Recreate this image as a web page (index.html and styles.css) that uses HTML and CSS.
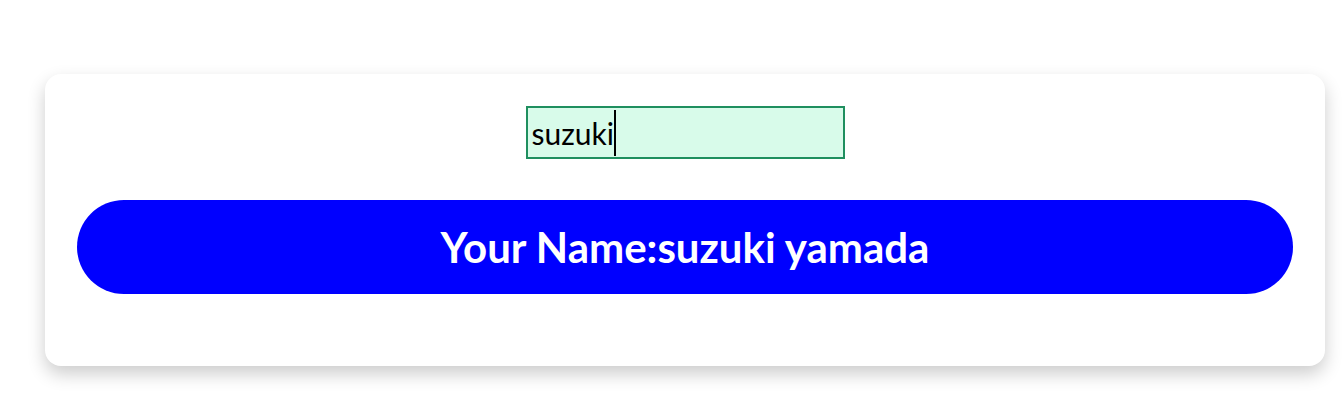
FILE: index.html
```html
<!DOCTYPE html>
<html lang="en">
<head>
<meta charset="utf-8">
<title>Your Name</title>
<link rel="stylesheet" href="styles.css">
</head>
<body>
<main class="page">
  <section class="card">
    <div class="field">
      <input class="name-input" type="text" value="suzuki">
      <span class="caret"></span>
    </div>
    <button class="name-button" type="button">Your Name:suzuki yamada</button>
  </section>
</main>
</body>
</html>
```

FILE: styles.css
```css
html, body {
  margin: 0;
  padding: 0;
  background: #ffffff;
}

.page {
  box-sizing: border-box;
  min-height: 100vh;
  padding: 74px 0 40px 45px;
  font-family: "Lato", "Liberation Sans", sans-serif;
}

.card {
  box-sizing: border-box;
  width: 1280px;
  height: 292px;
  background: #ffffff;
  border-radius: 16px;
  box-shadow: 0 8px 18px rgba(0, 0, 0, 0.2);
  padding: 32px 32px;
  display: flex;
  flex-direction: column;
  align-items: center;
}

.field {
  position: relative;
  width: 319px;
  height: 53px;
}

.name-input {
  box-sizing: border-box;
  width: 100%;
  height: 100%;
  border: 2px solid #1f8f5f;
  background: #d8fbea;
  font-family: "Lato", "Liberation Sans", sans-serif;
  font-size: 30px;
  color: #000;
  caret-color: transparent;
  padding: 0 4px;
  outline: none;
}

.caret {
  position: absolute;
  left: 88px;
  top: 4px;
  width: 2px;
  height: 46px;
  background: #000;
}

.name-button {
  margin-top: 41px;
  width: 100%;
  height: 94px;
  border: none;
  border-radius: 47px;
  background: #0000ff;
  color: #ffffff;
  font-family: "Lato", "Liberation Sans", sans-serif;
  font-weight: 700;
  font-size: 42px;
  cursor: pointer;
}
```
